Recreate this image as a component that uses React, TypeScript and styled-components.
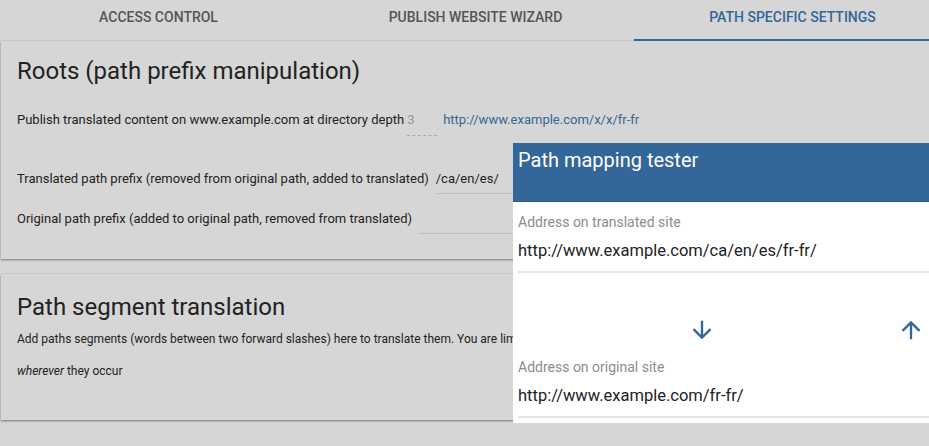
import React from "react";
import styled, { createGlobalStyle } from "styled-components";

const Global = createGlobalStyle`
  html, body { margin: 0; padding: 0; }
  body {
    background: #d6d6d6;
    font-family: Roboto, "Liberation Sans", Arial, sans-serif;
    color: #222;
    overflow: hidden;
    width: 929px;
    height: 446px;
  }
`;

const Page = styled.div`
  position: relative;
  width: 951px;
`;

const TabBar = styled.nav`
  display: grid;
  grid-template-columns: repeat(3, 317px);
`;

const Tab = styled.div<{ $active?: boolean }>`
  height: 32px;
  padding-top: 7px;
  line-height: 20px;
  text-align: center;
  font-size: 14px;
  font-weight: 500;
  text-transform: uppercase;
  color: ${(p) => (p.$active ? "#336699" : "#555")};
  border-bottom: 2px solid ${(p) => (p.$active ? "#336699" : "transparent")};
`;

const Card = styled.section<{ $top: number; $pt: number; $pb: number }>`
  margin: ${(p) => p.$top}px 0 0 1px;
  padding: ${(p) => p.$pt}px 16px ${(p) => p.$pb}px 16px;
  background: #d6d6d6;
  box-shadow: 0 1px 2px rgba(0, 0, 0, 0.45), 0 -1px 1px rgba(0, 0, 0, 0.03);
`;

const CardTitle = styled.h2`
  margin: 0;
  font-size: 24px;
  line-height: 28px;
  font-weight: 400;
  color: #222;
`;

const Row = styled.div<{ $mt: number }>`
  display: flex;
  align-items: flex-start;
  margin-top: ${(p) => p.$mt}px;
  font-size: 13px;
  line-height: 20px;
  white-space: nowrap;
`;

const Label = styled.span``;

const DepthInput = styled.span`
  display: inline-block;
  width: 30px;
  margin-left: 3px;
  padding-bottom: 5px;
  color: #999;
  border-bottom: 1px dashed #aaa;
`;

const Link = styled.a`
  margin-left: 6px;
  color: #336699;
  text-decoration: none;
`;

const TextInput = styled.span`
  display: inline-block;
  width: 240px;
  height: 20px;
  margin-left: 7px;
  padding-bottom: 4px;
  border-bottom: 1px solid #bdbdbd;
`;

const Para = styled.p<{ $mt: number }>`
  margin: ${(p) => p.$mt}px 0 0;
  font-size: 12px;
  line-height: 20px;
  white-space: nowrap;
  overflow: hidden;
`;

const Tester = styled.aside`
  position: absolute;
  left: 513px;
  top: 143px;
  width: 416px;
  background: #fff;
  padding-bottom: 5px;
`;

const TesterHeader = styled.header`
  height: 53px;
  padding: 5px 0 0 5px;
  background: #336699;
  border-bottom: 1px solid #2b5b8c;
  color: #fff;
  font-size: 20px;
  line-height: 24px;
`;

const TesterBody = styled.div`
  padding-left: 5px;
`;

const FieldLabel = styled.div<{ $mt: number }>`
  margin-top: ${(p) => p.$mt}px;
  font-size: 14px;
  line-height: 20px;
  color: #8c8c8c;
`;

const FieldValue = styled.div`
  margin-top: 7px;
  padding-bottom: 8px;
  font-size: 16.5px;
  line-height: 24px;
  color: #222;
  border-bottom: 2px solid #e6e6e6;
`;

const ArrowRow = styled.div`
  display: flex;
  margin-top: 42px;
  height: 30px;
  padding-left: 169px;
  gap: 179px;
`;

const ArrowButton = styled.button`
  width: 30px;
  height: 30px;
  padding: 0;
  border: 0;
  background: none;
  display: flex;
  align-items: center;
  justify-content: center;
  color: #336699;
`;

const Arrow = ({ up }: { up?: boolean }) => (
  <svg width="28" height="28" viewBox="0 0 24 24" fill="currentColor">
    {up ? (
      <path d="M4 12l1.41 1.41L11 7.83V20h2V7.83l5.58 5.59L20 12l-8-8-8 8z" />
    ) : (
      <path d="M20 12l-1.41-1.41L13 16.17V4h-2v12.17l-5.58-5.59L4 12l8 8 8-8z" />
    )}
  </svg>
);

export default function App() {
  return (
    <>
      <Global />
      <Page>
        <TabBar>
          <Tab>Access control</Tab>
          <Tab>Publish website wizard</Tab>
          <Tab $active>Path specific settings</Tab>
        </TabBar>

        <Card $top={0} $pt={16} $pb={25}>
          <CardTitle>Roots (path prefix manipulation)</CardTitle>
          <Row $mt={25}>
            <Label>Publish translated content on www.example.com at directory depth</Label>
            <DepthInput>3</DepthInput>
            <Link href="#">http://www.example.com/x/x/fr-fr</Link>
          </Row>
          <Row $mt={33}>
            <Label>Translated path prefix (removed from original path, added to translated)</Label>
            <TextInput>/ca/en/es/</TextInput>
          </Row>
          <Row $mt={15}>
            <Label>Original path prefix (added to original path, removed from translated)</Label>
            <TextInput />
          </Row>
        </Card>

        <Card $top={15} $pt={19} $pb={39}>
          <CardTitle>Path segment translation</CardTitle>
          <Para $mt={8}>
            Add paths segments (words between two forward slashes) here to translate them. You are limited to whole segments, which are translated
          </Para>
          <Para $mt={12}>
            <em>wherever</em> they occur
          </Para>
        </Card>

        <Tester>
          <TesterHeader>Path mapping tester</TesterHeader>
          <TesterBody>
            <FieldLabel $mt={10}>Address on translated site</FieldLabel>
            <FieldValue>http://www.example.com/ca/en/es/fr-fr/</FieldValue>
            <ArrowRow>
              <ArrowButton aria-label="translate to original">
                <Arrow />
              </ArrowButton>
              <ArrowButton aria-label="translate to translated">
                <Arrow up />
              </ArrowButton>
            </ArrowRow>
            <FieldLabel $mt={12}>Address on original site</FieldLabel>
            <FieldValue>http://www.example.com/fr-fr/</FieldValue>
          </TesterBody>
        </Tester>
      </Page>
    </>
  );
}
